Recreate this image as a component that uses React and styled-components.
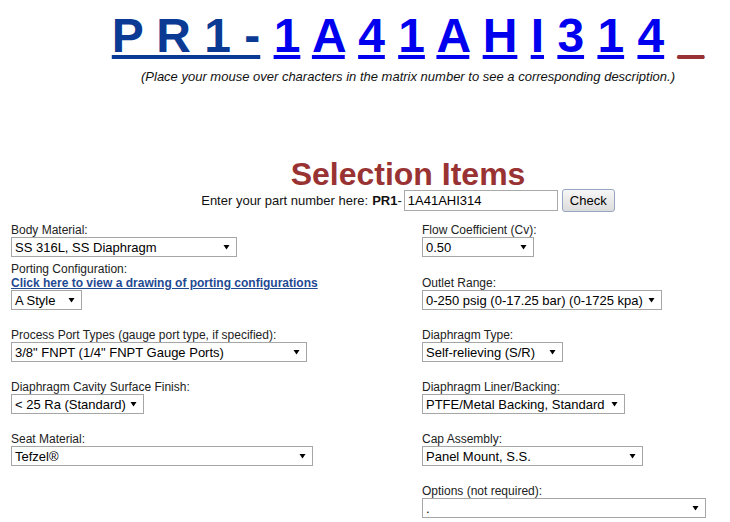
import React from "react";
import styled, { createGlobalStyle } from "styled-components";

const GlobalStyle = createGlobalStyle`
  html, body { margin: 0; padding: 0; overflow: hidden; background: #fff; }
  body { font-family: "Liberation Sans", Arial, sans-serif; color: #000; }
`;

const Page = styled.div`
  box-sizing: border-box;
  width: 730px;
  padding: 8px 0 0 8px;
`;

const Centered = styled.div`
  padding-left: 78px;
  text-align: center;
  white-space: nowrap;
`;

const Matrix = styled(Centered)`
  font-family: "Liberation Sans", Arial, sans-serif;
  font-weight: bold;
  font-size: 48px;
  line-height: normal;
`;

const MatrixLink = styled.a`
  color: ${(p) => p.$color};
  text-decoration: underline;
`;

const Hint = styled(Centered)`
  font-style: italic;
  font-size: 13px;
  margin-top: 6px;
  color: #111;
`;

const Title = styled(Centered)`
  margin: 76px 0 0;
  font-size: 32px;
  line-height: 29px;
  font-weight: bold;
  color: #993333;
`;

const EnterRow = styled(Centered)`
  display: flex;
  align-items: center;
  justify-content: center;
  height: 23px;
  font-size: 13px;
  color: #111;
`;

const Bold = styled.b`
  margin-left: 4px;
`;

const PartInput = styled.div`
  box-sizing: border-box;
  width: 154px;
  height: 21px;
  border: 1px solid #a9a9a9;
  margin-left: 2px;
  padding: 0 3px;
  display: flex;
  align-items: center;
  font-size: 13px;
  color: #000;
`;

const CheckButton = styled.button`
  box-sizing: border-box;
  width: 53px;
  height: 23px;
  margin-left: 4px;
  border: 1px solid #97a7c2;
  border-radius: 3px;
  background: linear-gradient(#f7f7f7, #dcdcdc);
  font-family: "Liberation Sans", Arial, sans-serif;
  font-size: 13px;
  color: #000;
  padding: 0;
`;

const Rows = styled.div`
  display: flex;
  flex-direction: column;
  padding-left: 3px;
`;

const RowGroup = styled.div`
  display: grid;
  grid-template-columns: 411px 1fr;
  align-items: end;
  margin-top: ${(p) => p.$top}px;
`;

const Field = styled.div`
  display: flex;
  flex-direction: column;
  align-items: flex-start;
`;

const Label = styled.div`
  font-size: 12px;
  line-height: 14px;
  color: #222;
`;

const DrawingLink = styled.a`
  font-size: 12px;
  line-height: 14px;
  font-weight: bold;
  color: #1f4a92;
  text-decoration: underline;
`;

const SelectBox = styled.div`
  box-sizing: border-box;
  width: ${(p) => p.$w}px;
  height: 20px;
  border: 1px solid #a6a6a6;
  padding: 0 6px 0 3px;
  display: flex;
  align-items: center;
  justify-content: space-between;
  font-size: 13px;
  color: #000;
  background: #fff;
  white-space: nowrap;
`;

const Arrow = () => (
  <svg width="7" height="6" viewBox="0 0 7 6" style={{ flex: "none" }}>
    <path d="M0.5 1 L6.5 1 L3.5 5.5 Z" fill="#000" />
  </svg>
);

const Select = ({ w, value }) => (
  <SelectBox $w={w}>
    <span>{value}</span>
    <Arrow />
  </SelectBox>
);

const chars = ["1", "A", "4", "1", "A", "H", "I", "3", "1", "4"];

export default function App() {
  return (
    <>
      <GlobalStyle />
      <Page>
        <Matrix>
          <MatrixLink href="#" $color="#0b3a94">P R 1 -</MatrixLink>{" "}
          {chars.map((c, i) => (
            <React.Fragment key={i}>
              <MatrixLink href="#" $color="#0000ee">{c}</MatrixLink>{" "}
            </React.Fragment>
          ))}
          <MatrixLink href="#" $color="#993333">_</MatrixLink>
        </Matrix>
        <Hint>
          (Place your mouse over characters in the matrix number to see a corresponding description.)
        </Hint>
        <Title>Selection Items</Title>
        <EnterRow>
          Enter your part number here:<Bold>PR1</Bold>-
          <PartInput>1A41AHI314</PartInput>
          <CheckButton>Check</CheckButton>
        </EnterRow>
        <Rows>
          <RowGroup $top={11}>
            <Field>
              <Label>Body Material:</Label>
              <Select w={226} value="SS 316L, SS Diaphragm" />
            </Field>
            <Field>
              <Label>Flow Coefficient (Cv):</Label>
              <Select w={112} value="0.50" />
            </Field>
          </RowGroup>
          <RowGroup $top={5}>
            <Field>
              <Label>Porting Configuration:</Label>
              <DrawingLink href="#">Click here to view a drawing of porting configurations</DrawingLink>
              <Select w={71} value="A Style" />
            </Field>
            <Field>
              <Label>Outlet Range:</Label>
              <Select w={240} value="0-250 psig (0-17.25 bar) (0-1725 kpa)" />
            </Field>
          </RowGroup>
          <RowGroup $top={18}>
            <Field>
              <Label>Process Port Types (gauge port type, if specified):</Label>
              <Select w={296} value={'3/8" FNPT (1/4" FNPT Gauge Ports)'} />
            </Field>
            <Field>
              <Label>Diaphragm Type:</Label>
              <Select w={141} value="Self-relieving (S/R)" />
            </Field>
          </RowGroup>
          <RowGroup $top={18}>
            <Field>
              <Label>Diaphragm Cavity Surface Finish:</Label>
              <Select w={133} value="< 25 Ra (Standard)" />
            </Field>
            <Field>
              <Label>Diaphragm Liner/Backing:</Label>
              <Select w={203} value="PTFE/Metal Backing, Standard" />
            </Field>
          </RowGroup>
          <RowGroup $top={18}>
            <Field>
              <Label>Seat Material:</Label>
              <Select w={302} value="Tefzel®" />
            </Field>
            <Field>
              <Label>Cap Assembly:</Label>
              <Select w={221} value="Panel Mount, S.S." />
            </Field>
          </RowGroup>
          <RowGroup $top={18}>
            <div />
            <Field>
              <Label>Options (not required):</Label>
              <Select w={284} value="." />
            </Field>
          </RowGroup>
        </Rows>
      </Page>
    </>
  );
}
